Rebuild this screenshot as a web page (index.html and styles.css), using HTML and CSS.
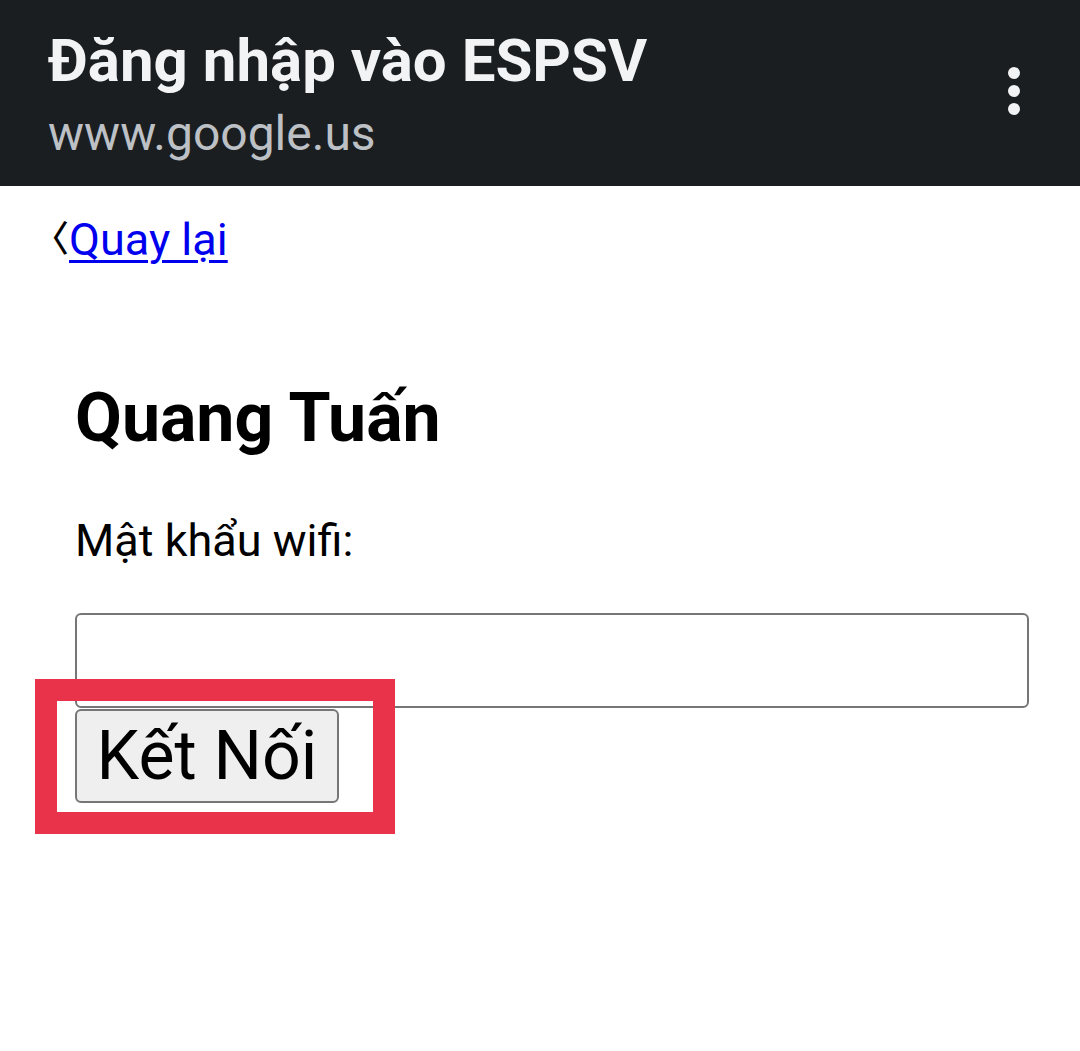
FILE: index.html
```html
<!DOCTYPE html>
<html lang="vi">
<head>
<meta charset="utf-8">
<title>Đăng nhập vào ESPSV</title>
<link rel="stylesheet" href="styles.css">
</head>
<body>
<header class="topbar">
  <div class="topbar-text">
    <div class="topbar-title">Đăng nhập vào ESPSV</div>
    <div class="topbar-url">www.google.us</div>
  </div>
  <button class="kebab" aria-label="Menu">
    <span class="dot"></span><span class="dot"></span><span class="dot"></span>
  </button>
</header>
<main class="page">
  <div class="back"><span class="chev">〈</span><a href="#" class="back-link">Quay lại</a></div>
  <form class="login">
    <h2 class="name">Quang Tuấn</h2>
    <label class="label" for="pw">Mật khẩu wifi:</label>
    <input class="field" id="pw" type="password">
    <div class="btn-wrap">
      <button class="submit" type="button">Kết Nối</button>
      <div class="highlight"></div>
    </div>
  </form>
</main>
</body>
</html>
```
FILE: styles.css
```css
* { box-sizing: border-box; }
html, body { margin: 0; padding: 0; background: #fff; }
body { font-family: Roboto, "Noto Sans", sans-serif; color: #000; width: 1080px; height: 1051px; overflow: hidden; }

.topbar {
  height: 186px;
  background: #1b1e21;
  display: flex;
  align-items: flex-start;
  justify-content: space-between;
  padding: 26px 60px 0 48px;
}
.topbar-title { color: #f1f3f4; font-size: 60px; font-weight: 700; line-height: 70px; letter-spacing: 0; }
.topbar-url { color: #bdc1c6; font-size: 48px; line-height: 60px; margin-top: 8px; }
.kebab {
  background: none; border: 0; padding: 0; margin-top: 41px;
  display: flex; flex-direction: column; gap: 6px; align-items: center;
}
.dot { width: 12px; height: 12px; border-radius: 50%; background: #f1f3f4; display: block; }

.page { padding: 25px 52px 0 0; }
.back { font-size: 45px; line-height: 56px; display: flex; align-items: baseline; }
.chev {
  font-family: "Noto Sans CJK JP", "DejaVu Sans", sans-serif;
  font-size: 36px; font-weight: 500; color: #000; display: inline-block;
  width: 69px; text-align: right; transform: translateY(-3px);
}
.back-link { color: #0000ee; text-decoration: underline; text-decoration-thickness: 3px; text-underline-offset: 5px; }

.login { padding-left: 75px; padding-top: 110px; }
.name { margin: 0; font-size: 68px; font-weight: 700; line-height: 80px; }
.label { display: block; font-size: 45px; line-height: 56px; margin-top: 55px; }
.field {
  display: block; width: 954px; height: 95px; margin-top: 44px;
  border: 2.5px solid #767676; border-radius: 6px; background: #fff;
}
.btn-wrap { position: relative; display: inline-block; margin-top: 1px; vertical-align: top; }
.submit {
  display: block;
  font-family: Roboto, sans-serif; font-size: 68px; line-height: 80px;
  background: #efefef; border: 2.5px solid #767676; border-radius: 6px;
  width: 264px; height: 94px; padding: 0; color: #000;
}
.highlight {
  position: absolute; left: -40px; top: -30px; width: 360px; height: 155px;
  border: 22px solid #e8334a;
}
```
